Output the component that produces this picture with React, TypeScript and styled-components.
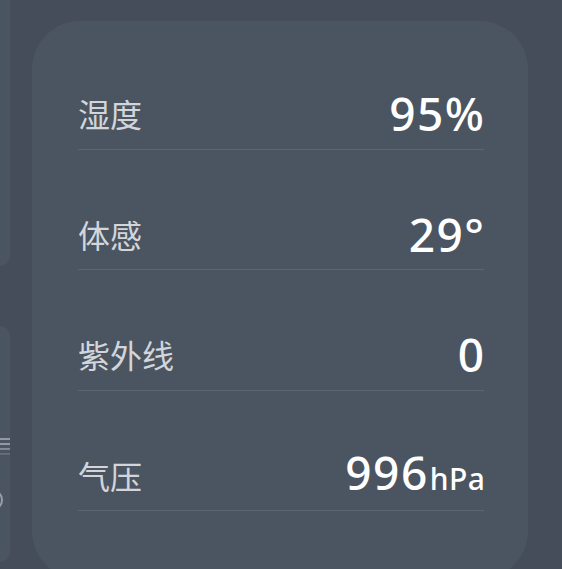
import styled, { createGlobalStyle } from "styled-components";

type Metric = {
  label: string;
  value: string;
  unit?: string;
};

const metrics: Metric[] = [
  { label: "湿度", value: "95%" },
  { label: "体感", value: "29°" },
  { label: "紫外线", value: "0" },
  { label: "气压", value: "996", unit: "hPa" },
];

const GlobalStyle = createGlobalStyle`
  html, body {
    margin: 0;
    padding: 0;
    background: #444d59;
    overflow: hidden;
  }
  * {
    box-sizing: border-box;
  }
`;

export default function App() {
  return (
    <>
      <GlobalStyle />
      <Page>
        <SideColumn>
          <SidePanel $height={266} $rounded="bottom" />
          <SidePanel $height={236} $rounded="both">
            <Stripes />
            <RingEdge />
          </SidePanel>
        </SideColumn>

        <Card>
          {metrics.map((m) => (
            <Row key={m.label}>
              <Label>{m.label}</Label>
              <Value>
                {m.value}
                {m.unit && <Unit>{m.unit}</Unit>}
              </Value>
            </Row>
          ))}
        </Card>
      </Page>
    </>
  );
}

const Page = styled.main`
  display: flex;
  align-items: flex-start;
  gap: 22px;
  width: 562px;
  height: 569px;
  background: #444d59;
  overflow: hidden;
`;

const SideColumn = styled.div`
  display: flex;
  flex-direction: column;
  gap: 60px;
  width: 10px;
  flex-shrink: 0;
`;

const SidePanel = styled.div<{ $height: number; $rounded: "bottom" | "both" }>`
  position: relative;
  height: ${(p) => p.$height}px;
  background: #4b5561;
  border-radius: ${(p) =>
    p.$rounded === "bottom" ? "0 0 20px 0" : "0 20px 20px 0"};
  overflow: hidden;
  padding-top: 112px;
`;

const Stripes = styled.div`
  width: 10px;
  height: 20px;
  background: repeating-linear-gradient(
    to bottom,
    rgba(205, 210, 216, 0.55) 0px,
    rgba(205, 210, 216, 0.55) 2px,
    transparent 2px,
    transparent 5px
  );
  -webkit-mask-image: linear-gradient(to bottom, #000 40%, transparent);
  mask-image: linear-gradient(to bottom, #000 40%, transparent);
`;

const RingEdge = styled.div`
  width: 22px;
  height: 22px;
  margin-top: 31px;
  margin-left: -19px;
  border: 2px solid rgba(205, 210, 216, 0.6);
  border-radius: 50%;
`;

const Card = styled.section`
  display: flex;
  flex-direction: column;
  width: 496px;
  height: 558px;
  margin-top: 21px;
  padding: 8px 44px 0 46px;
  background: #4b5561;
  border-radius: 48px;
  flex-shrink: 0;
`;

const Row = styled.div`
  display: flex;
  align-items: center;
  justify-content: space-between;
  height: 120.6px;
  padding: 59px 0 10px;
  border-bottom: 1px solid #5c6570;
`;

const Label = styled.span`
  font-family: "Noto Sans CJK SC", "Noto Sans", sans-serif;
  font-size: 32px;
  line-height: 50px;
  color: #d2d6db;
`;

const Value = styled.span`
  font-family: "Noto Sans", "Open Sans", sans-serif;
  font-size: 46px;
  font-weight: 500;
  line-height: 50px;
  letter-spacing: 1.5px;
  margin-right: -1.5px;
  color: #ffffff;
  white-space: nowrap;
`;

const Unit = styled.span`
  font-size: 30px;
  font-weight: 500;
  letter-spacing: 0.5px;
  margin-left: 1px;
`;
